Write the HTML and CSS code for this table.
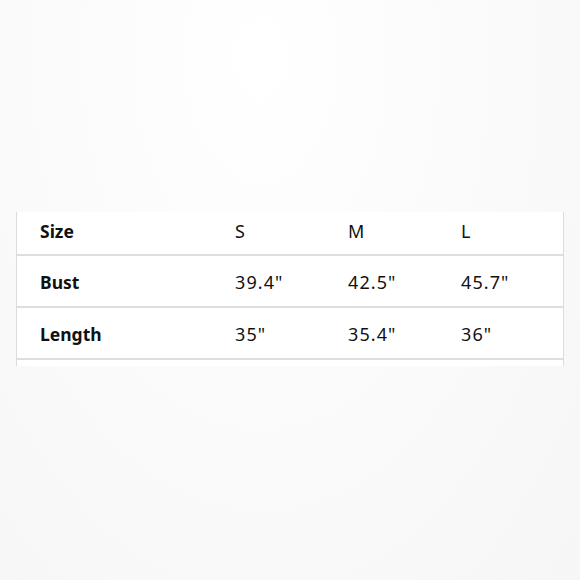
FILE: index.html
```html
<!DOCTYPE html>
<html>
<head>
<meta charset="utf-8">
<link rel="stylesheet" href="styles.css">
</head>
<body>
<div class="page">
  <div class="chart">
    <div class="row row-head">
      <div class="label">Size</div><div class="cell">S</div><div class="cell">M</div><div class="cell">L</div>
    </div>
    <div class="row">
      <div class="label">Bust</div><div class="cell">39.4"</div><div class="cell">42.5"</div><div class="cell">45.7"</div>
    </div>
    <div class="row">
      <div class="label">Length</div><div class="cell">35"</div><div class="cell">35.4"</div><div class="cell">36"</div>
    </div>
    <div class="row"></div>
  </div>
</div>
</body>
</html>
```
FILE: styles.css
```css
html, body {
  margin: 0;
  padding: 0;
}
body {
  width: 580px;
  height: 580px;
  background: radial-gradient(ellipse at 45% 10%, #ffffff 0%, #fbfbfb 45%, #f6f6f6 100%);
  font-family: "Noto Sans", "Open Sans", sans-serif;
  color: #111;
  overflow: hidden;
}
.page {
  padding-top: 212px;
  padding-left: 16px;
}
.chart {
  width: 546px;
  height: 154px;
  background: #fff;
  border-left: 1px solid #dcdcdc;
  border-right: 1px solid #dcdcdc;
  overflow: hidden;
}
.row {
  display: grid;
  grid-template-columns: 195px 113px 113px 1fr;
  align-items: center;
  height: 49px;
  padding-top: 1px;
  padding-left: 23px;
  border-bottom: 2px solid #dedede;
  font-size: 17.5px;
}
.row-head {
  height: 38px;
  padding-top: 0;
  padding-bottom: 4px;
}
.label {
  font-weight: 700;
}
.cell {
  font-weight: 400;
  font-size: 18px;
  letter-spacing: 1.1px;
}
```
